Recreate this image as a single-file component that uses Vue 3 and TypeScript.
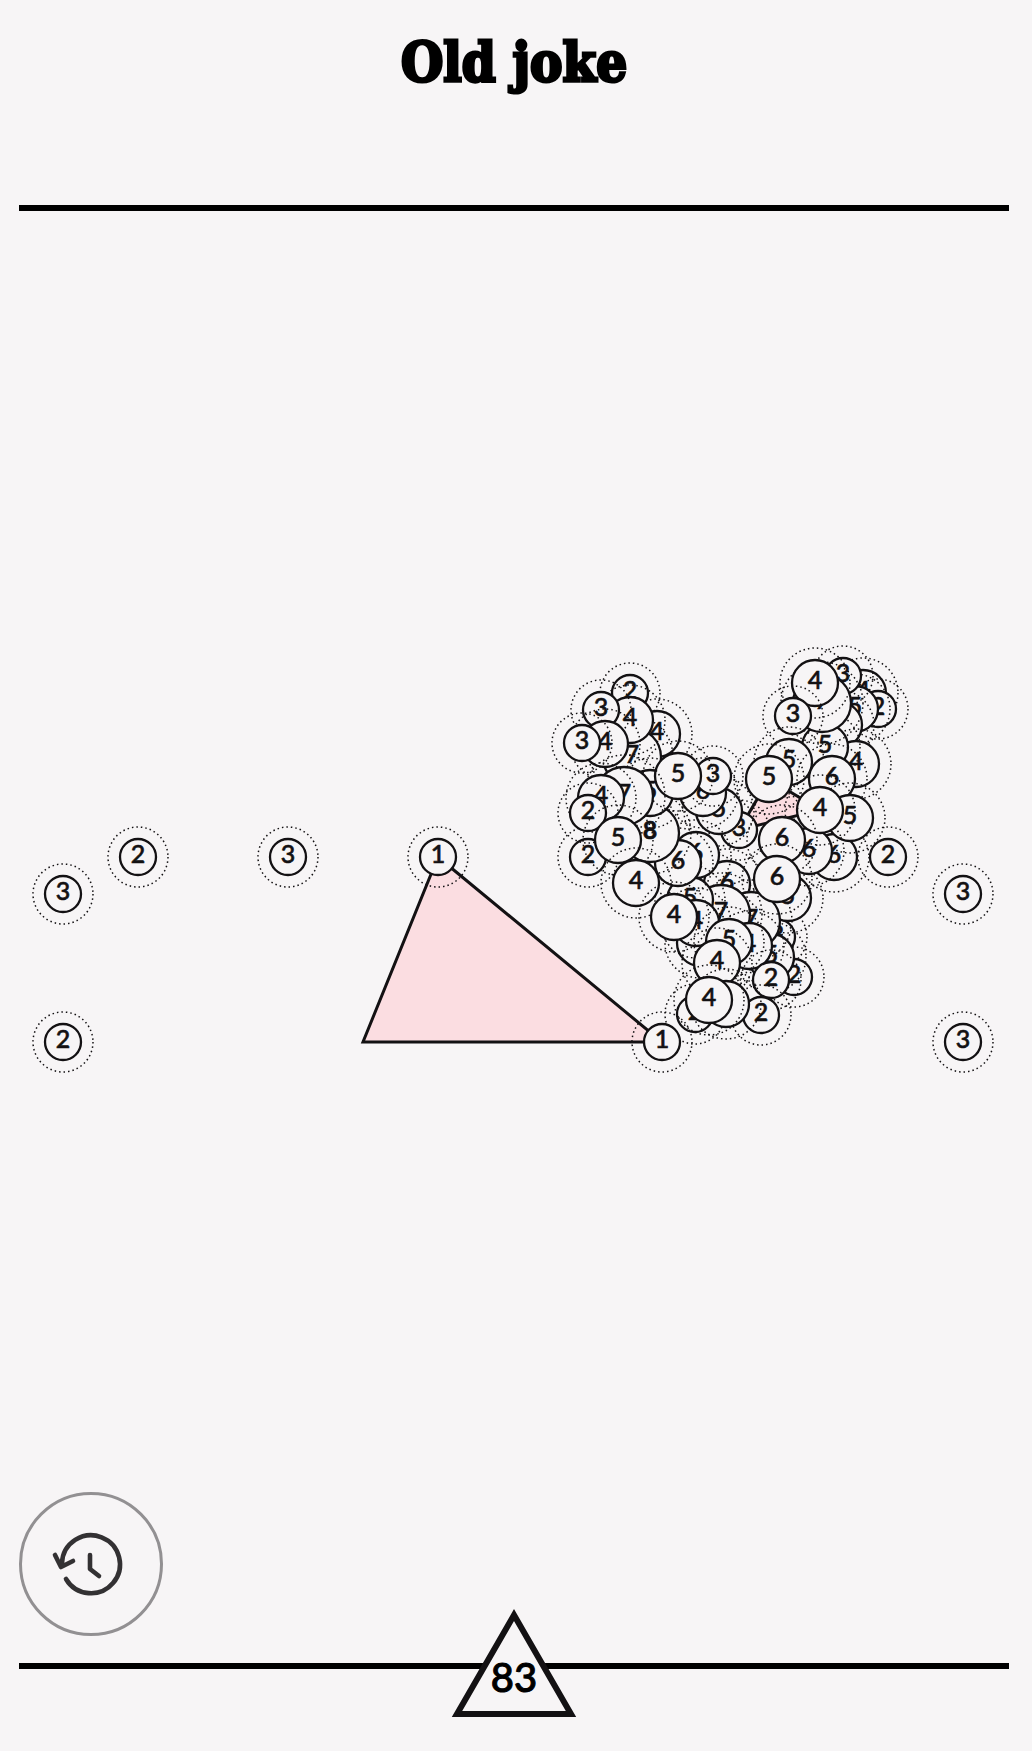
<script setup lang="ts">
interface Vertex {
  x: number
  y: number
  n: number | null
  size: 's' | 'm' | 'l'
}

const radius = { s: 18, m: 23, l: 29 }
const ringGap = 12

// Painted in order: later vertices cover earlier ones.
const raw: [number, number, number | null, Vertex['size']][] = [
  [63, 1042, 2, 's'], [63, 894, 3, 's'], [138, 857, 2, 's'], [288, 857, 3, 's'],
  [963, 894, 3, 's'], [963, 1042, 3, 's'], [888, 857, 2, 's'], [438, 857, 1, 's'],
  [588, 857, 2, 's'], [630, 693, 2, 's'], [657, 734, 4, 'm'], [632, 757, 7, 'l'],
  [630, 720, 4, 'm'], [601, 710, 3, 's'], [605, 744, 4, 'm'], [582, 743, 3, 's'],
  [739, 830, 3, 's'], [719, 811, 5, 'm'], [703, 793, 6, 'm'], [713, 776, 3, 's'],
  [777, 937, 3, 's'], [794, 977, 2, 's'], [771, 957, 5, 'm'], [788, 898, 5, 'm'],
  [727, 884, 6, 'm'], [751, 921, 7, 'l'], [721, 914, 7, 'l'],
  [696, 855, 6, 'm'], [690, 900, 5, 'm'], [678, 863, 6, 'm'],
  [650, 833, 8, 'l'], [650, 793, 5, 'm'], [678, 776, 5, 'm'], [624, 796, 7, 'l'],
  [601, 798, 4, 'm'], [588, 813, 2, 's'], [618, 840, 5, 'm'], [636, 883, 4, 'm'],
  [700, 943, null, 'm'], [696, 923, 4, 'm'], [674, 917, 4, 'm'],
  [749, 946, 4, 'm'], [729, 942, 5, 'm'], [717, 963, 4, 'm'],
  [771, 980, 2, 's'], [761, 1015, 2, 's'], [695, 1014, 2, 's'],
  [726, 1004, null, 'm'], [709, 1000, 4, 'm'],
  [863, 693, 4, 'm'], [878, 709, 2, 's'], [855, 709, 5, 'm'], [839, 725, null, 'm'],
  [856, 764, 4, 'm'], [825, 747, 5, 'm'], [843, 676, 3, 's'], [822, 703, 7, 'l'],
  [815, 683, 4, 'm'], [793, 716, 3, 's'], [789, 762, 5, 'm'], [769, 779, 5, 'm'],
  [832, 779, 6, 'm'], [834, 857, 6, 'm'], [850, 818, 5, 'm'], [809, 851, 6, 'm'],
  [820, 810, 4, 'm'], [782, 840, 6, 'm'], [777, 879, 6, 'm'],
  [662, 1042, 1, 's'],
]

const vertices: Vertex[] = raw.map(([x, y, n, size]) => ({ x, y, n, size }))
const triangles = ['438,857 662,1042 363,1042', '769,779 820,810 739,830']
const remaining = 83
</script>

<template>
  <div class="page">
    <header class="header">
      <h1 class="title">Old joke</h1>
    </header>

    <main class="board">
      <svg class="canvas" viewBox="19 211 990 1281" role="img" aria-label="Puzzle board">
        <polygon v-for="t in triangles" :key="t" class="face" :points="t" />
        <g v-for="(v, i) in vertices" :key="i">
          <circle class="ring" :cx="v.x" :cy="v.y" :r="radius[v.size] + ringGap" />
          <circle class="disc" :cx="v.x" :cy="v.y" :r="radius[v.size]" />
          <text
            v-if="v.n !== null"
            class="digit"
            :class="{ heavy: v.n === 8 }"
            :x="v.x"
            :y="v.y + 6"
          >{{ v.n }}</text>
        </g>
      </svg>
    </main>

    <footer class="footer">
      <button class="history" type="button" aria-label="History">
        <svg viewBox="0 0 144 144" aria-hidden="true">
          <path d="M43 71 A29 29 0 1 1 47 87 M36 63 L42 75 L54 69 M71 63 V77 L80 84" />
        </svg>
      </button>
      <div class="rule">
        <div class="counter">
          <svg viewBox="0 0 124 110" aria-hidden="true">
            <polygon points="62,8 119,107 5,107" />
          </svg>
          <span class="count">{{ remaining }}</span>
        </div>
      </div>
    </footer>
  </div>
</template>

<style>
body {
  margin: 0;
  background: #f7f5f6;
}
</style>

<style scoped>
.page {
  display: flex;
  flex-direction: column;
  box-sizing: border-box;
  min-height: 100vh;
  padding: 0 23px 0 19px;
  background: #f7f5f6;
  color: #000;
  font-family: Lato, sans-serif;
}

.header {
  box-sizing: border-box;
  height: 211px;
  padding-top: 26px;
  border-bottom: 6px solid #000;
}

.title {
  margin: 0;
  font-family: "DejaVu Serif Condensed", "DejaVu Serif", serif;
  font-stretch: condensed;
  font-size: 54px;
  font-weight: 700;
  line-height: 72px;
  text-align: center;
  white-space: nowrap;
  -webkit-text-stroke: 3px #000;
}

.board {
  flex: 1;
}

.canvas {
  display: block;
  width: 100%;
}

.face {
  fill: #fbdde1;
  stroke: #131113;
  stroke-width: 3;
}

.ring {
  fill: none;
  stroke: #131113;
  stroke-width: 1.5;
  stroke-dasharray: 1.5 3;
}

.disc {
  fill: #f7f5f6;
  stroke: #131113;
  stroke-width: 2.3;
}

.digit {
  fill: #131113;
  stroke: #131113;
  stroke-width: 0.6;
  font-size: 25px;
  font-weight: 500;
  text-anchor: middle;
}

.heavy {
  font-weight: 700;
}

.footer {
  padding-bottom: 82px;
}

.history {
  display: block;
  box-sizing: border-box;
  width: 144px;
  height: 144px;
  margin: 0 0 27px;
  padding: 0;
  border: 3px solid #929092;
  border-radius: 50%;
  background: none;
}

.history svg {
  display: block;
  width: 144px;
  height: 144px;
  margin: -3px;
  fill: none;
  stroke: #333133;
  stroke-width: 4.6;
  stroke-linecap: round;
  stroke-linejoin: round;
}

.rule {
  position: relative;
  height: 6px;
  background: #000;
}

.counter {
  position: absolute;
  top: -56px;
  left: 50%;
  width: 124px;
  height: 110px;
  margin-left: -62px;
}

.counter svg {
  display: block;
  width: 124px;
  height: 110px;
  overflow: visible;
  fill: #f7f5f6;
  stroke: #131113;
  stroke-width: 6;
}

.count {
  position: absolute;
  inset: 46px 0 auto;
  font-size: 40px;
  font-weight: 500;
  line-height: 48px;
  text-align: center;
  -webkit-text-stroke: 1px #000;
}
</style>
